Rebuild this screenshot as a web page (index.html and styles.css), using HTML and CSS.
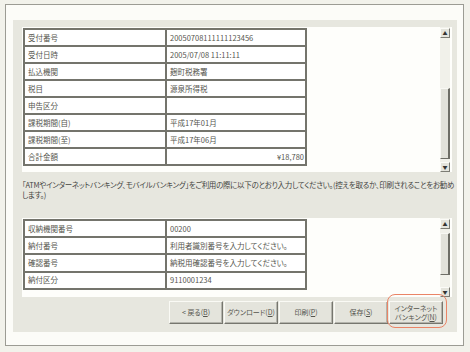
FILE: index.html
```html
<!DOCTYPE html>
<html lang="ja">
<head>
    <meta charset="UTF-8">
    <title>納付情報</title>
    <link rel="stylesheet" href="styles.css">
</head>
<body>
    <div class="frame">
        <div class="panel">
            <div class="scrollbox top-box">
                <div class="scrollbox-body">
                    <table class="info">
                        <tr><td class="label">受付番号</td><td>20050708111111123456</td></tr>
                        <tr><td class="label">受付日時</td><td>2005/07/08 11:11:11</td></tr>
                        <tr><td class="label">払込機関</td><td>麹町税務署</td></tr>
                        <tr><td class="label">税目</td><td>源泉所得税</td></tr>
                        <tr><td class="label">申告区分</td><td></td></tr>
                        <tr><td class="label">課税期間(自)</td><td>平成17年01月</td></tr>
                        <tr><td class="label">課税期間(至)</td><td>平成17年06月</td></tr>
                        <tr><td class="label">合計金額</td><td class="amount">¥18,780</td></tr>
                    </table>
                </div>
                <div class="scrollbar">
                    <div class="arrow">▲</div>
                    <div class="track" style="height:50px"></div>
                    <div class="thumb" style="height:71px"></div>
                    <div class="track-rest"></div>
                    <div class="arrow">▼</div>
                </div>
            </div>

            <p class="note">「ATMやインターネットバンキング、モバイルバンキング」をご利用の際に以下のとおり入力してください。(控えを取るか、印刷されることをお勧めします。)</p>

            <div class="scrollbox bottom-box">
                <div class="scrollbox-body">
                    <table class="info pay">
                        <tr><td class="label">収納機関番号</td><td>00200</td></tr>
                        <tr><td class="label">納付番号</td><td>利用者識別番号を入力してください。</td></tr>
                        <tr><td class="label">確認番号</td><td>納税用確認番号を入力してください。</td></tr>
                        <tr><td class="label">納付区分</td><td>9110001234</td></tr>
                    </table>
                </div>
                <div class="scrollbar">
                    <div class="arrow">▲</div>
                    <div class="track" style="height:4px"></div>
                    <div class="thumb" style="height:42px"></div>
                    <div class="track-rest"></div>
                    <div class="arrow">▼</div>
                </div>
            </div>

            <div class="buttons">
                <button class="btn">&lt; 戻る(<u>B</u>)</button>
                <button class="btn">ダウンロード(<u>D</u>)</button>
                <button class="btn">印刷(<u>P</u>)</button>
                <button class="btn">保存(<u>S</u>)</button>
                <button class="btn btn-net">インターネット<br>バンキング(<u>N</u>)</button>
            </div>
        </div>
    </div>
</body>
</html>
```

FILE: styles.css
```css
body {
    margin: 0;
    background: #f2f2eb;
    font-family: "Noto Sans CJK JP", "Noto Sans", sans-serif;
    color: #55554e;
}

.frame {
    box-sizing: border-box;
    width: 459px;
    height: 342px;
    margin: 4px 0 0 5px;
    padding: 15px 0 0 7px;
    border: 1px solid #9c9c94;
    background: #fcfcf8;
}

.panel {
    box-sizing: border-box;
    width: 444px;
    height: 312px;
    padding: 7px 4px 0 9px;
    background: #e7e7df;
}

.scrollbox {
    display: flex;
    width: 430px;
    background: #fefefb;
}

.top-box {
    height: 145px;
}

.bottom-box {
    height: 79px;
    margin-top: 18px;
}

.scrollbox-body {
    flex: 1;
    padding: 1px 0 0 1px;
}

.scrollbar {
    display: flex;
    flex-direction: column;
    width: 10px;
    margin-right: 2px;
    background: #f1f1ea;
}

.arrow {
    box-sizing: border-box;
    height: 10px;
    width: 10px;
    margin-top: 1px;
    border: 1px solid;
    border-color: #fbfbf7 #7c7c74 #7c7c74 #fbfbf7;
    background: #e4e4dc;
    font-size: 5px;
    line-height: 8px;
    text-align: center;
    color: #333;
}

.thumb {
    box-sizing: border-box;
    border: 1px solid;
    border-color: #f8f8f3 #6e6e66 #6e6e66 #f8f8f3;
    border-right-width: 2px;
    background: #e2e2da;
}

.track-rest {
    flex: 1;
}

.info {
    border-collapse: collapse;
    width: 284px;
    font-size: 7.5px;
    line-height: 10px;
    font-feature-settings: "palt";
}

.info td {
    height: 15px;
    padding: 0 3px;
    border: 2px solid #74746c;
    background: #fff;
    white-space: nowrap;
}

.info td.label {
    width: 134px;
}

.info td.amount {
    text-align: right;
    padding-right: 1px;
}

.pay td {
    height: 15.2px;
}

.note {
    margin: 8px -4px 0 0;
    font-size: 7.5px;
    line-height: 10px;
    letter-spacing: -0.3px;
    font-feature-settings: "palt";
    color: #45453f;
}

.buttons {
    display: flex;
    justify-content: flex-end;
    gap: 1px;
    margin: 4px 10px 0 0;
}

.btn {
    position: relative;
    box-sizing: border-box;
    width: 54px;
    height: 23px;
    padding: 0;
    border: 1px solid;
    border-color: #fafaf5 #76766e #76766e #fafaf5;
    box-shadow: inset -1px -1px #b4b4ac;
    background: #e4e4dc;
    font-family: inherit;
    font-size: 7px;
    line-height: 9px;
    color: #55554e;
    font-feature-settings: "palt";
}

.btn-net::after {
    content: "";
    position: absolute;
    top: -8px;
    right: -5px;
    bottom: -5px;
    left: -3px;
    border: 1.5px solid #ea8466;
    border-radius: 8px;
}
```
